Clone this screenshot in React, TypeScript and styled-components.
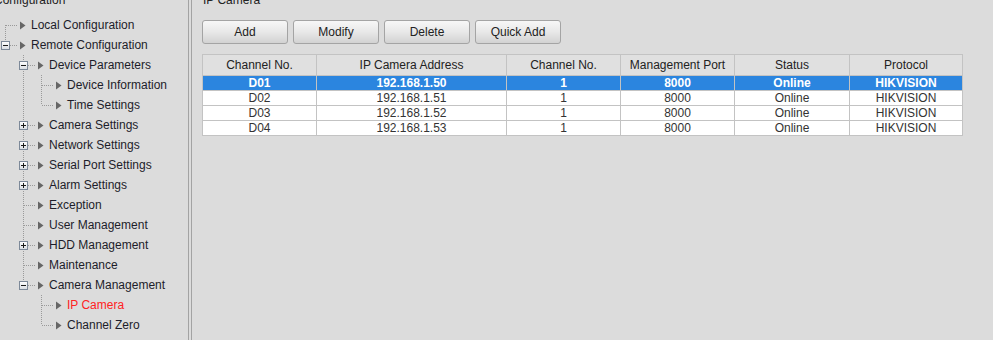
import React from "react";
import styled, { createGlobalStyle } from "styled-components";

const GlobalStyle = createGlobalStyle`
  html, body {
    margin: 0;
    padding: 0;
    background: #dcdcdc;
    overflow: hidden;
  }
  body {
    font-family: Arial, "Liberation Sans", sans-serif;
    font-size: 12px;
    color: #222;
  }
`;

const Page = styled.div`
  display: flex;
  width: 993px;
  height: 340px;
  background: #dcdcdc;
`;

const Sidebar = styled.div`
  width: 188px;
  flex-shrink: 0;
  overflow: hidden;
`;

const Splitter = styled.div`
  width: 2px;
  flex-shrink: 0;
  border-left: 1px solid #a3a3a3;
  border-right: 1px solid #a3a3a3;
`;

const Main = styled.div`
  flex: 1;
  padding-left: 10px;
  overflow: hidden;
`;

const PanelTitle = styled.div<{ $indent: number; $height: number }>`
  height: ${(p) => p.$height}px;
  overflow: hidden;
  & > span {
    display: block;
    margin-top: -10px;
    margin-left: ${(p) => p.$indent}px;
    line-height: 20px;
    color: #222;
    white-space: nowrap;
  }
`;

const TreeRow = styled.div`
  display: flex;
  align-items: center;
  height: 20px;
`;

const Cell = styled.svg`
  display: block;
  flex-shrink: 0;
`;

const Arrow = styled.svg`
  display: block;
  flex-shrink: 0;
  margin-left: 2px;
  margin-right: 5px;
`;

const Label = styled.span<{ $active?: boolean }>`
  white-space: nowrap;
  line-height: 20px;
  color: ${(p) => (p.$active ? "#ff2222" : "#1d1d2a")};
`;

const Toolbar = styled.div`
  display: flex;
  gap: 5px;
  margin-top: 6px;
`;

const Button = styled.button`
  width: 86px;
  height: 24px;
  padding: 0;
  border: 1px solid #a4a4a4;
  border-radius: 3px;
  background: linear-gradient(to bottom, #f7f7f7 0%, #e8e8e8 50%, #d2d2d2 100%);
  font-family: Arial, "Liberation Sans", sans-serif;
  font-size: 12px;
  color: #222;
`;

const Table = styled.table`
  margin-top: 10px;
  border-collapse: collapse;
  table-layout: fixed;
  width: 760px;
  border: 1px solid #c3c3c3;
  font-family: Arial, "Liberation Sans", sans-serif;
  font-size: 12px;
`;

const Th = styled.th`
  height: 20px;
  padding: 0;
  font-weight: normal;
  color: #222;
  background: #e0e0e0;
  border: 1px solid #c3c3c3;
  text-align: center;
`;

const Td = styled.td<{ $selected?: boolean }>`
  height: 14px;
  padding: 0;
  line-height: 14px;
  text-align: center;
  border: 1px solid #c3c3c3;
  background: ${(p) => (p.$selected ? "#2b85df" : "#ffffff")};
  color: ${(p) => (p.$selected ? "#ffffff" : "#333")};
  font-weight: ${(p) => (p.$selected ? "bold" : "normal")};
`;

type Join = "first" | "tee" | "elbow";
type Box = "minus" | "plus" | null;

interface TreeItem {
  label: string;
  guides: boolean[];
  join: Join;
  box: Box;
  active?: boolean;
}

const tree: TreeItem[] = [
  { label: "Local Configuration", guides: [], join: "first", box: null },
  { label: "Remote Configuration", guides: [], join: "elbow", box: "minus" },
  { label: "Device Parameters", guides: [false], join: "tee", box: "minus" },
  { label: "Device Information", guides: [false, true], join: "tee", box: null },
  { label: "Time Settings", guides: [false, true], join: "elbow", box: null },
  { label: "Camera Settings", guides: [false], join: "tee", box: "plus" },
  { label: "Network Settings", guides: [false], join: "tee", box: "plus" },
  { label: "Serial Port Settings", guides: [false], join: "tee", box: "plus" },
  { label: "Alarm Settings", guides: [false], join: "tee", box: "plus" },
  { label: "Exception", guides: [false], join: "tee", box: null },
  { label: "User Management", guides: [false], join: "tee", box: null },
  { label: "HDD Management", guides: [false], join: "tee", box: "plus" },
  { label: "Maintenance", guides: [false], join: "tee", box: null },
  { label: "Camera Management", guides: [false], join: "elbow", box: "minus" },
  { label: "IP Camera", guides: [false, false], join: "tee", box: null, active: true },
  { label: "Channel Zero", guides: [false, false], join: "elbow", box: null },
];

const DOT = "#9a9a9a";

function Guide({ on }: { on: boolean }) {
  return (
    <Cell width="18" height="20" viewBox="0 0 18 20">
      {on && <line x1="5.5" y1="0" x2="5.5" y2="20" stroke={DOT} strokeDasharray="1 1" />}
    </Cell>
  );
}

function Connector({ join, box }: { join: Join; box: Box }) {
  const top = join === "first" ? 10 : 0;
  const bottom = join === "elbow" ? 10 : 20;
  return (
    <Cell width="18" height="20" viewBox="0 0 18 20">
      <line x1="5.5" y1={top} x2="5.5" y2={bottom} stroke={DOT} strokeDasharray="1 1" />
      <line x1="6" y1="10.5" x2="18" y2="10.5" stroke={DOT} strokeDasharray="1 1" />
      {box && (
        <>
          <defs>
            <linearGradient id="boxfill" x1="0" y1="0" x2="0" y2="1">
              <stop offset="0" stopColor="#ffffff" />
              <stop offset="1" stopColor="#d9dde3" />
            </linearGradient>
          </defs>
          <rect x="1.5" y="6.5" width="8" height="8" fill="url(#boxfill)" stroke="#7d8999" />
          <line x1="3" y1="10.5" x2="8" y2="10.5" stroke="#1a1a1a" />
          {box === "plus" && <line x1="5.5" y1="8" x2="5.5" y2="13" stroke="#1a1a1a" />}
        </>
      )}
    </Cell>
  );
}

function TreeNode({ item }: { item: TreeItem }) {
  return (
    <TreeRow>
      {item.guides.map((g, i) => (
        <Guide key={i} on={g} />
      ))}
      <Connector join={item.join} box={item.box} />
      <Arrow width="6" height="9" viewBox="0 0 6 9">
        <polygon points="0,0.5 5.5,4.5 0,8.5" fill="#666666" />
      </Arrow>
      <Label $active={item.active}>{item.label}</Label>
    </TreeRow>
  );
}

const columns = [
  { title: "Channel No.", width: 114 },
  { title: "IP Camera Address", width: 190 },
  { title: "Channel No.", width: 114 },
  { title: "Management Port", width: 114 },
  { title: "Status", width: 115 },
  { title: "Protocol", width: 113 },
];

const cameras = [
  ["D01", "192.168.1.50", "1", "8000", "Online", "HIKVISION"],
  ["D02", "192.168.1.51", "1", "8000", "Online", "HIKVISION"],
  ["D03", "192.168.1.52", "1", "8000", "Online", "HIKVISION"],
  ["D04", "192.168.1.53", "1", "8000", "Online", "HIKVISION"],
];

export default function App() {
  return (
    <>
      <GlobalStyle />
      <Page>
        <Sidebar>
          <PanelTitle $indent={-6} $height={15}>
            <span>Configuration</span>
          </PanelTitle>
          {tree.map((item, i) => (
            <TreeNode key={i} item={item} />
          ))}
        </Sidebar>
        <Splitter />
        <Main>
          <PanelTitle $indent={1} $height={14}>
            <span>IP Camera</span>
          </PanelTitle>
          <Toolbar>
            <Button>Add</Button>
            <Button>Modify</Button>
            <Button>Delete</Button>
            <Button>Quick Add</Button>
          </Toolbar>
          <Table>
            <colgroup>
              {columns.map((c, i) => (
                <col key={i} style={{ width: c.width }} />
              ))}
            </colgroup>
            <thead>
              <tr>
                {columns.map((c, i) => (
                  <Th key={i}>{c.title}</Th>
                ))}
              </tr>
            </thead>
            <tbody>
              {cameras.map((row, r) => (
                <tr key={r}>
                  {row.map((v, c) => (
                    <Td key={c} $selected={r === 0}>
                      {v}
                    </Td>
                  ))}
                </tr>
              ))}
            </tbody>
          </Table>
        </Main>
      </Page>
    </>
  );
}
